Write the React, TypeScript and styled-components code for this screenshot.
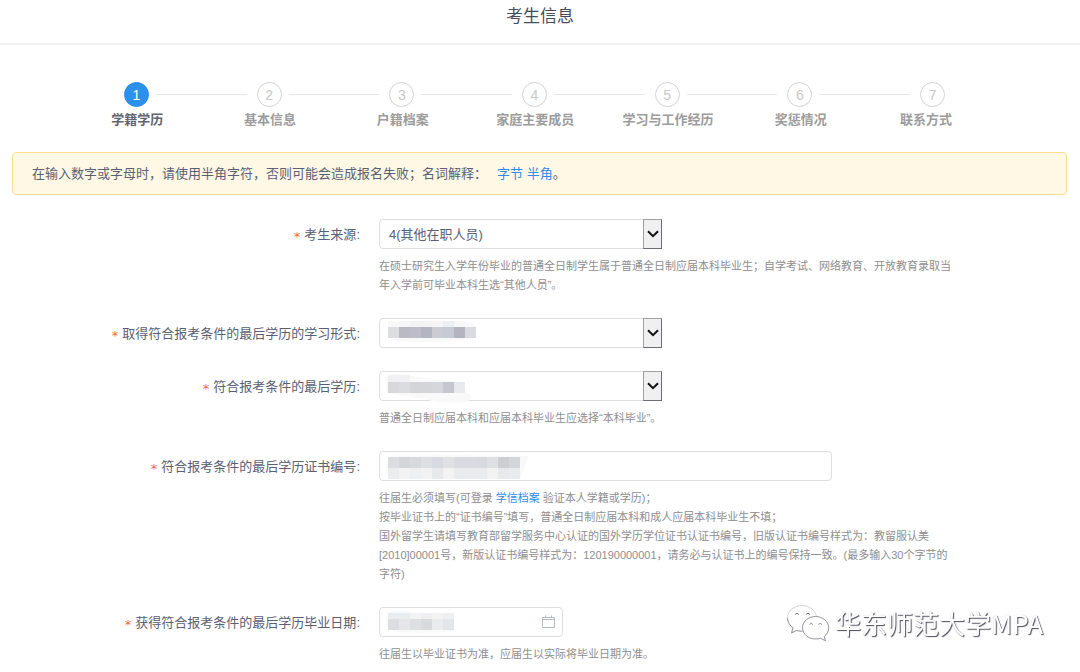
import React from 'react';
import styled, { createGlobalStyle } from 'styled-components';

const GlobalStyle = createGlobalStyle`
  *, *::before, *::after { box-sizing: border-box; }
  body {
    margin: 0;
    background: #fff;
    color: #5a6072;
    font-family: 'Liberation Sans', 'Noto Sans CJK SC', sans-serif;
    font-size: 13px;
  }
`;

const Header = styled.header`
  display: flex;
  justify-content: center;
  height: 45px;
  padding-top: 5px;
  border-bottom: 2px solid #f1f1f2;
`;

const Title = styled.h1`
  margin: 0;
  font-size: 17px;
  line-height: 24px;
  font-weight: 400;
  color: #464c5b;
`;

const Steps = styled.ol`
  display: flex;
  list-style: none;
  margin: 0;
  padding: 37px 95px 21px 71px;
`;

const Step = styled.li<{ $last: boolean }>`
  flex: ${(p) => (p.$last ? '0 0 118px' : '1 1 0')};
  min-width: 0;
`;

const StepHead = styled.div`
  display: flex;
  align-items: center;
  padding-left: 53px;
`;

const StepNumber = styled.span<{ $active: boolean }>`
  flex: none;
  width: 25px;
  height: 25px;
  border: 1px solid ${(p) => (p.$active ? '#2d8cf0' : '#d3d3d3')};
  border-radius: 50%;
  background: ${(p) => (p.$active ? '#2b91ea' : '#fff')};
  color: ${(p) => (p.$active ? '#fff' : '#c8c8c8')};
  font-size: 14px;
  line-height: 24px;
  text-align: center;
`;

const StepLine = styled.span`
  flex: 1;
  height: 1px;
  margin: 0 -43px 0 7px;
  background: #e6e6e6;
`;

const StepLabel = styled.div<{ $active: boolean }>`
  margin-top: 3px;
  font-size: 13px;
  line-height: 20px;
  font-weight: 700;
  text-align: center;
  white-space: nowrap;
  color: ${(p) => (p.$active ? '#62656f' : '#9c9c9c')};
`;

const Link = styled.a`
  color: #2d8cf0;
  text-decoration: none;
`;

const Notice = styled.p`
  margin: 1px 13px 24px 12px;
  padding: 10px 19px;
  border: 1px solid #ffdf8f;
  border-radius: 4px;
  background: #fff8e5;
  line-height: 21px;
`;

const NoticeLinks = styled.span`
  margin-left: 10px;
`;

const Form = styled.form`
  display: flex;
  flex-direction: column;
  gap: 23px;
  padding-right: 100px;
`;

const Row = styled.div`
  display: flex;
  align-items: flex-start;
`;

const Label = styled.label`
  display: flex;
  flex: none;
  justify-content: flex-end;
  width: 379px;
  height: 30px;
  padding-right: 19px;
  font-size: 13px;
  line-height: 31px;
  white-space: nowrap;
`;

const Required = styled.span`
  margin-right: 4px;
  font-family: 'DejaVu Sans', sans-serif;
  line-height: 35px;
  color: #ed6a45;
`;

const Field = styled.div`
  flex: 1;
  min-width: 0;
`;

const Control = styled.div<{ $width: number }>`
  position: relative;
  width: ${(p) => p.$width}px;
  max-width: 100%;
  height: 30px;
`;

const Input = styled.input`
  display: block;
  width: 100%;
  height: 30px;
  padding: 0 9px;
  border: 1px solid #dcdee2;
  border-radius: 4px;
  background: #fff;
  color: #5a6072;
  font: inherit;
`;

const Select = styled(Input).attrs({ as: 'select' })`
  appearance: none;
`;

const DropButton = styled.span`
  position: absolute;
  top: 0;
  right: 0;
  display: flex;
  align-items: center;
  justify-content: center;
  width: 19px;
  height: 30px;
  border: 1px solid #a0a0a4;
  border-right-color: #6c6c72;
  border-bottom-color: #6c6c72;
  background: #f0f0f0;
  pointer-events: none;
`;

const MosaicLayer = styled.svg`
  position: absolute;
  top: 0;
  left: 0;
  pointer-events: none;
`;

const DateIcon = styled.svg`
  position: absolute;
  top: 8px;
  right: 8px;
  pointer-events: none;
`;

const Help = styled.p`
  margin: 8px 0 0;
  font-size: 11px;
  line-height: 19px;
  color: #8e8e90;
`;

const Watermark = styled.div`
  position: fixed;
  right: 37px;
  bottom: 30px;
  display: flex;
  align-items: center;
  gap: 4px;
  font-family: 'Noto Sans CJK SC', sans-serif;
  font-size: 26px;
  line-height: 38px;
  font-weight: 400;
  color: #fff;
  text-shadow: 1px 1px 1px #4d4d5a, 0 0 1px #c8c8ce;
`;

const steps = ['学籍学历', '基本信息', '户籍档案', '家庭主要成员', '学习与工作经历', '奖惩情况', '联系方式'];

interface MosaicBand {
  y: number;
  height: number;
  colors: string[];
}

function Mosaic({ halo, bands }: { halo: string; bands: MosaicBand[] }) {
  return (
    <MosaicLayer width="160" height="34" aria-hidden="true">
      <path d={halo} fill="#f9f9fa" />
      {bands.map((band) =>
        band.colors.map((color, i) => (
          <rect key={`${band.y}-${i}`} x={9 + i * 11} y={band.y} width="11" height={band.height} fill={color} />
        )),
      )}
    </MosaicLayer>
  );
}

function FormRow({ id, label, width, control, children }: {
  id: string;
  label: string;
  width: number;
  control: React.ReactNode;
  children?: React.ReactNode;
}) {
  return (
    <Row>
      <Label htmlFor={id}>
        <Required>*</Required>
        {label}:
      </Label>
      <Field>
        <Control $width={width}>{control}</Control>
        {children && <Help>{children}</Help>}
      </Field>
    </Row>
  );
}

function SelectBox({ id, value }: { id: string; value?: string }) {
  return (
    <>
      <Select id={id}>
        <option>{value}</option>
      </Select>
      <DropButton>
        <svg width="12" height="8" viewBox="0 0 12 8" fill="none" stroke="#111" strokeWidth="2" aria-hidden="true">
          <path d="M1 1.2 6 6.2 11 1.2" />
        </svg>
      </DropButton>
    </>
  );
}

export default function App() {
  return (
    <>
      <GlobalStyle />
      <Header>
        <Title>考生信息</Title>
      </Header>
      <main>
        <Steps>
          {steps.map((name, i) => {
            const last = i === steps.length - 1;
            return (
              <Step key={name} $last={last}>
                <StepHead>
                  <StepNumber $active={i === 0}>{i + 1}</StepNumber>
                  {!last && <StepLine />}
                </StepHead>
                <StepLabel $active={i === 0}>{name}</StepLabel>
              </Step>
            );
          })}
        </Steps>
        <Notice>
          在输入数字或字母时，请使用半角字符，否则可能会造成报名失败；名词解释：
          <NoticeLinks>
            <Link href="#byte">字节</Link> <Link href="#half-width">半角</Link>。
          </NoticeLinks>
        </Notice>
        <Form>
          <FormRow
            id="source"
            label="考生来源"
            width={283}
            control={<SelectBox id="source" value="4(其他在职人员)" />}
          >
            在硕士研究生入学年份毕业的普通全日制学生属于普通全日制应届本科毕业生；自学考试、网络教育、开放教育录取当
            <br />
            年入学前可毕业本科生选“其他人员”。
          </FormRow>
          <FormRow
            id="study-form"
            label="取得符合报考条件的最后学历的学习形式"
            width={283}
            control={
              <>
                <SelectBox id="study-form" />
                <Mosaic
                  halo="M13 4Q50 0 94 5Q99 12 96 20Q70 26 16 23Q8 18 9 9Z"
                  bands={[
                    { y: 3, height: 6, colors: ['#f8f8f9', '#f7f7f8', '#f3f3f5', '#f3f3f5', '#f5f5f6', '#eeeff2', '#f7f7f8'] },
                    { y: 9, height: 11, colors: ['#dcdde1', '#b9bac4', '#bcbdc8', '#b4b5c2', '#cacbd3', '#c6cad4', '#b4b4c1', '#dadbe1'] },
                  ]}
                />
              </>
            }
          />
          <FormRow
            id="degree"
            label="符合报考条件的最后学历"
            width={283}
            control={
              <>
                <SelectBox id="degree" />
                <Mosaic
                  halo="M6 6Q14 1 24 4Q50 8 76 10Q86 14 88 22Q96 25 88 31Q58 33 46 28L8 22Z"
                  bands={[
                    { y: 4, height: 7, colors: ['#f1f1f3', '#f1f1f3'] },
                    { y: 11, height: 11, colors: ['#d8d8dc', '#dadce0', '#d4d5d9', '#d4d5d9', '#d6d7dc', '#c5c7d0', '#e9eaed'] },
                  ]}
                />
              </>
            }
          >
            普通全日制应届本科和应届本科毕业生应选择“本科毕业”。
          </FormRow>
          <FormRow
            id="certificate"
            label="符合报考条件的最后学历证书编号"
            width={453}
            control={
              <>
                <Input id="certificate" type="text" />
                <Mosaic
                  halo="M12 5Q70 3 150 5L141 28H12Q4 18 9 9Z"
                  bands={[
                    {
                      y: 6,
                      height: 11,
                      colors: ['#dcdde0', '#d4d5d9', '#d8d9dd', '#dedfe3', '#d8dbe1', '#e0e1e5', '#d9dbe0', '#d9dbe0', '#d8dadf', '#dfe0e4', '#cdced2', '#d3d5d9'],
                    },
                    {
                      y: 17,
                      height: 11,
                      colors: ['#ebecee', '#f3f3f4', '#eeeff1', '#f2f2f3', '#e7e9ed', '#f3f3f4', '#eaebee', '#eaebee', '#e9ebee', '#f2f2f3', '#e8e9ec', '#eaebed'],
                    },
                  ]}
                />
              </>
            }
          >
            往届生必须填写(可登录 <Link href="#archive">学信档案</Link> 验证本人学籍或学历)；
            <br />
            按毕业证书上的“证书编号”填写，普通全日制应届本科和成人应届本科毕业生不填；
            <br />
            国外留学生请填写教育部留学服务中心认证的国外学历学位证书认证书编号，旧版认证书编号样式为：教留服认美
            <br />
            [2010]00001号，新版认证书编号样式为：120190000001，请务必与认证书上的编号保持一致。(最多输入30个字节的
            <br />
            字符)
          </FormRow>
          <FormRow
            id="graduation"
            label="获得符合报考条件的最后学历毕业日期"
            width={184}
            control={
              <>
                <Input id="graduation" type="text" />
                <Mosaic
                  halo="M12 5Q26 2 34 6L75 8V24Q40 28 12 24Q3 16 9 8Z"
                  bands={[
                    { y: 6, height: 6, colors: ['#ebecee', '#ebecee', '#f3f3f4', '#efeff1', '#f3f3f4', '#eff0f2'] },
                    { y: 12, height: 11, colors: ['#dcdde1', '#e6e6e8', '#dedfe3', '#d9dade', '#eaebed', '#e4e5e9'] },
                  ]}
                />
                <DateIcon width="13" height="13" viewBox="0 0 13 13" fill="none" stroke="#b4b9c4" aria-hidden="true">
                  <path d="M.5 2.5h12v10H.5zM.5 4.5h12M3.5 .5v2M9.5 .5v2" />
                </DateIcon>
              </>
            }
          >
            往届生以毕业证书为准，应届生以实际将毕业日期为准。
          </FormRow>
        </Form>
      </main>
      <Watermark>
        <svg width="45" height="38" viewBox="0 0 45 38" fill="#fff" aria-hidden="true">
          <path
            d="M16 1.5C8 1.5 1.5 7 1.5 14c0 4 2.300 7.500 5.500 9.800L5.500 29l5-2.600c2 .6 3.700.8 5.500.8 8 0 14.500-5.800 14.500-13S24 1.500 16 1.500Z"
            stroke="#d4d4d8"
          />
          <path d="M1.500 14c0 4 2.300 7.500 5.500 9.800L5.500 29l5-2.600c2 .6 3.700.8 5.500.8" fill="none" stroke="#9a9aa0" />
          <path
            d="M29.500 12.500c-7.300 0-13 5-13 11.200s5.700 11.300 13 11.300c1.700 0 3.400-.3 5-.8l5 2.600-1.300-4.300c2.800-2.100 4.500-5.200 4.500-8.800 0-6.200-5.900-11.200-13.200-11.200Z"
            stroke="#93939a"
          />
          <path
            d="M9 10.500q2-2.600 4 0M20 10.500q2-2.600 4 0M23.500 20.500q1.700-2.300 3.400 0M32.500 20.500q1.700-2.300 3.400 0"
            fill="none"
            stroke="#85858c"
          />
        </svg>
        <span>华东师范大学MPA</span>
      </Watermark>
    </>
  );
}
